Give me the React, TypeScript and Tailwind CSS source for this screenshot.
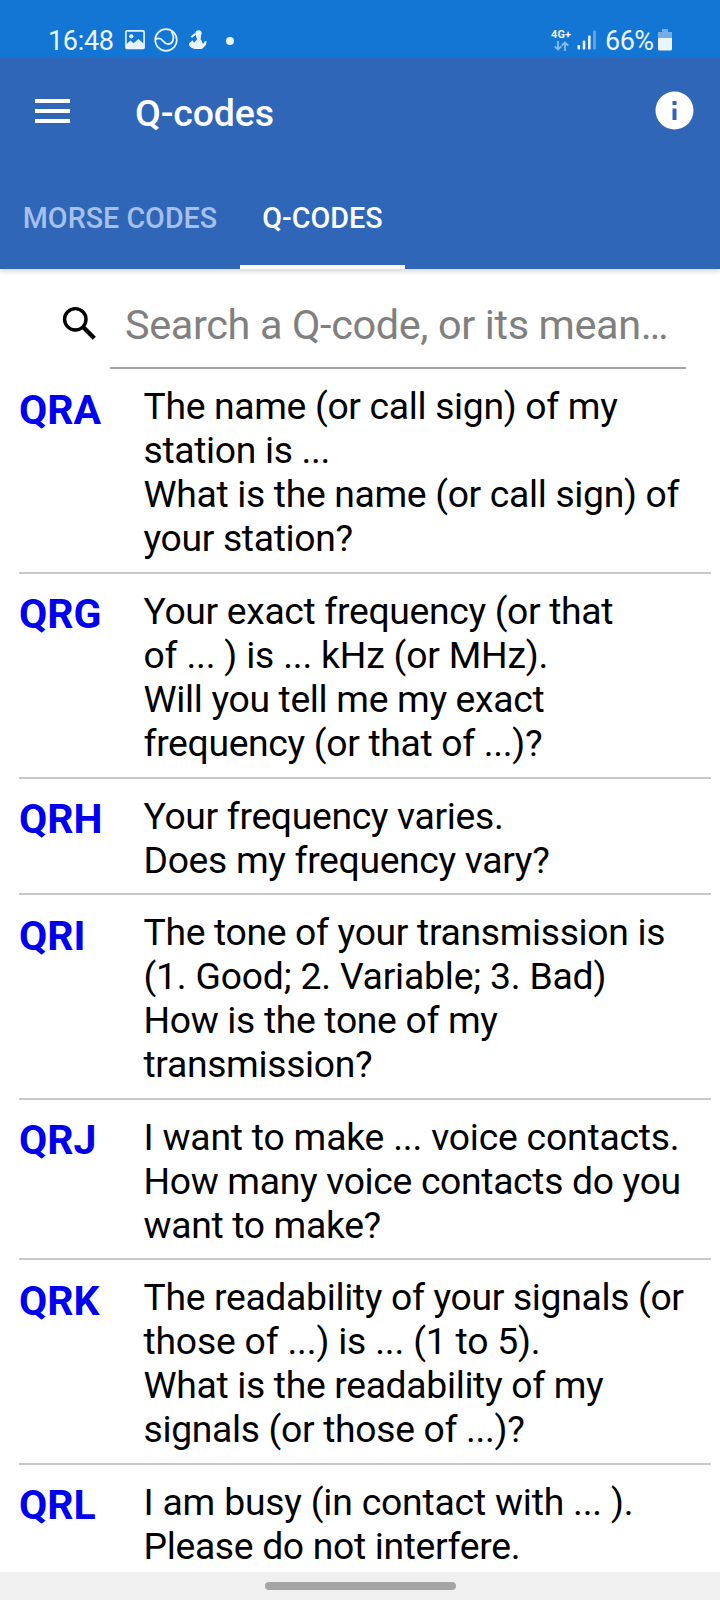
import clsx from "clsx";

const codes = [
  {
    code: "QRA",
    lines: [
      "The name (or call sign) of my",
      "station is ...",
      "What is the name (or call sign) of",
      "your station?",
    ],
  },
  {
    code: "QRG",
    lines: [
      "Your exact frequency (or that",
      "of ... ) is ... kHz (or MHz).",
      "Will you tell me my exact",
      "frequency (or that of ...)?",
    ],
  },
  {
    code: "QRH",
    lines: ["Your frequency varies.", "Does my frequency vary?"],
  },
  {
    code: "QRI",
    lines: [
      "The tone of your transmission is",
      "(1. Good; 2. Variable; 3. Bad)",
      "How is the tone of my",
      "transmission?",
    ],
  },
  {
    code: "QRJ",
    lines: [
      "I want to make ... voice contacts.",
      "How many voice contacts do you",
      "want to make?",
    ],
  },
  {
    code: "QRK",
    lines: [
      "The readability of your signals (or",
      "those of ...) is ... (1 to 5).",
      "What is the readability of my",
      "signals (or those of ...)?",
    ],
  },
  {
    code: "QRL",
    lines: ["I am busy (in contact with ... ).", "Please do not interfere."],
  },
];

function StatusBar() {
  return (
    <div className="flex h-[58px] shrink-0 items-start justify-between bg-[#1476d4] pl-12 pr-12 pt-[25px] text-[#eaf5ff]">
      <div className="flex h-[33px] items-center">
        <span className="w-[77px] whitespace-nowrap text-[27px] leading-[33px] tracking-[-0.3px]">16:48</span>
        <svg className="-mt-1 block" width="20" height="20" viewBox="0 0 20 20">
          <rect x="0.9" y="0.9" width="18.2" height="17.6" rx="1" fill="none" stroke="currentColor" strokeWidth="1.6" />
          <circle cx="6.3" cy="6.3" r="2.1" fill="currentColor" />
          <path d="M1 14.5 5.5 10.5 8.5 13.2 13.5 9 19 14V18.5H1Z" fill="currentColor" />
        </svg>
        <svg className="-mt-1 ml-[9px] block" width="24" height="24" viewBox="0 0 24 24" fill="none" stroke="currentColor">
          <circle cx="12" cy="12" r="10.8" strokeWidth="1.7" />
          <path d="M1.5 11.5C4.500 9.500 7 10.500 9 13C12 17 16.500 17 18.500 13.500C20 10.500 19.500 7 17.500 3.500" strokeWidth="1.8" />
        </svg>
        <svg className="-mt-1 ml-[10px] block" width="20" height="20" viewBox="0 0 20 20" fill="currentColor">
          <circle cx="10.5" cy="3.4" r="3.1" />
          <path d="M2.5 6.5 7 3 8 4.800 4 7.800Z" />
          <path d="M8 5.5H12.500C14 7.500 11.500 9 13.500 10.500C14.500 12 14 13 14.500 13.500C15.500 14 16.500 12.500 16.300 11.500L18.500 11C18.800 15 16 17.500 13.500 19H6.500C3 18 .7 16 1 13.500L4.500 10.200 6 12.700 9 9.500C9.500 8.500 8 7.500 8 5.500Z" />
        </svg>
        <span className="-mt-0.5 ml-[18px] h-2 w-2 rounded-full bg-current" />
      </div>
      <div className="flex h-[33px] items-center">
        <div className="-mt-1 flex w-[22px] flex-col items-center">
          <span className="text-[11px] font-bold leading-[12px]">4G+</span>
          <svg className="block opacity-55" width="15" height="10" viewBox="0 0 15 10" fill="none" stroke="currentColor" strokeWidth="1.8">
            <path d="M4 0V8.5M.7 5.3 4 8.6 7.3 5.3M11 10V1.5M7.7 4.7 11 1.4 14.3 4.7" />
          </svg>
        </div>
        <svg className="-mt-1 ml-[5px] block" width="20" height="20" viewBox="0 0 20 20" fill="currentColor">
          <rect x="0.5" y="15" width="2.6" height="4.5" rx="1" />
          <rect x="5.7" y="10.5" width="2.6" height="9" rx="1" />
          <rect x="11" y="5.5" width="2.6" height="14" rx="1" />
          <rect x="16.2" y="0.5" width="2.6" height="19" rx="1" opacity="0.4" />
        </svg>
        <span className="ml-2 w-[53px] whitespace-nowrap text-[27px] leading-[33px] tracking-[-0.5px]">66%</span>
        <svg className="-mt-1 block" width="14" height="22" viewBox="0 0 14 22" fill="currentColor">
          <path d="M4 0H10V3H14V9H0V3H4Z" opacity="0.45" />
          <path d="M0 9H14V20Q14 21.5 12.5 21.5H1.5Q0 21.5 0 20Z" />
        </svg>
      </div>
    </div>
  );
}

function Header() {
  return (
    <header className="relative z-10 h-[211px] shrink-0 bg-[#2f66b8] text-white shadow-[0_2px_6px_rgba(0,0,0,0.18)]">
      <div className="flex h-[109px] items-center pl-[35px] pr-[26px]">
        <div className="mb-[3px] flex w-[35px] flex-col gap-[6px]">
          <span className="h-1 bg-white" />
          <span className="h-1 bg-white" />
          <span className="h-1 bg-white" />
        </div>
        <h1 className="ml-[65px] text-[37.5px] font-medium leading-[44px] tracking-[-0.15px]">Q-codes</h1>
        <svg className="mb-1 ml-auto block" width="39" height="39" viewBox="0 0 39 39">
          <circle cx="19.5" cy="19.5" r="19" fill="#fff" />
          <path d="M17.5 10h4v4h-4zM17.5 17.5h4v11.5h-4z" fill="#2f66b8" />
        </svg>
      </div>
      <nav className="flex h-[102px] text-[28.7px] font-medium">
        <div className="flex w-[240px] items-center justify-center whitespace-nowrap pt-0.5 text-[#a5c0ea]">MORSE CODES</div>
        <div className="flex w-[165px] items-center justify-center whitespace-nowrap border-b-4 border-white pt-1.5">Q-CODES</div>
      </nav>
    </header>
  );
}

function SearchField() {
  return (
    <div className="flex h-[100.4px] shrink-0 pl-[62px] pr-[34px]">
      <svg className="mt-[37px] block" width="34" height="34" viewBox="0 0 34 34" fill="none" stroke="#000">
        <circle cx="13.3" cy="13.3" r="10.7" strokeWidth="3.4" />
        <path d="M21.3 21.3 32.3 32.3" strokeWidth="4.4" />
      </svg>
      <div className="ml-[14px] flex-1 border-b-2 border-[#a3a3a3] pl-[15px] pt-8">
        <span className="whitespace-nowrap text-[41.4px] leading-[48px] tracking-[-0.36px] text-[#808080]">Search a Q-code, or its mean…</span>
      </div>
    </div>
  );
}

function CodeRow({ code, lines }: { code: string; lines: string[] }) {
  return (
    <li className="ml-[19px] mr-[9px] flex border-b-2 border-[#c8c8c8] pb-[11.6px] pt-[15px]">
      <span className="w-[125px] shrink-0 pt-[1.5px] text-[41px] font-bold leading-[48px] text-[#0000f0]">{code}</span>
      <p className="-ml-[0.5px] text-[37.3px] leading-[44px] text-black">
        {lines.map((line) => (
          <span
            key={line}
            className={clsx(
              "block whitespace-nowrap",
              /\. /.test(line) ? "tracking-[-0.2px]" : "tracking-[-0.33px]",
            )}
          >
            {line}
          </span>
        ))}
      </p>
    </li>
  );
}

export default function App() {
  return (
    <div className="flex h-[1600px] w-[720px] flex-col overflow-hidden bg-white font-['Roboto',sans-serif]">
      <StatusBar />
      <Header />
      <SearchField />
      <ul className="min-h-0 flex-1 overflow-hidden">
        {codes.map((item) => (
          <CodeRow key={item.code} code={item.code} lines={item.lines} />
        ))}
      </ul>
      <div className="flex h-[28px] shrink-0 justify-center bg-[#f0f0f0] pt-[10px]">
        <span className="h-[8px] w-[191px] rounded-full bg-[#a5a5a5]" />
      </div>
    </div>
  );
}
